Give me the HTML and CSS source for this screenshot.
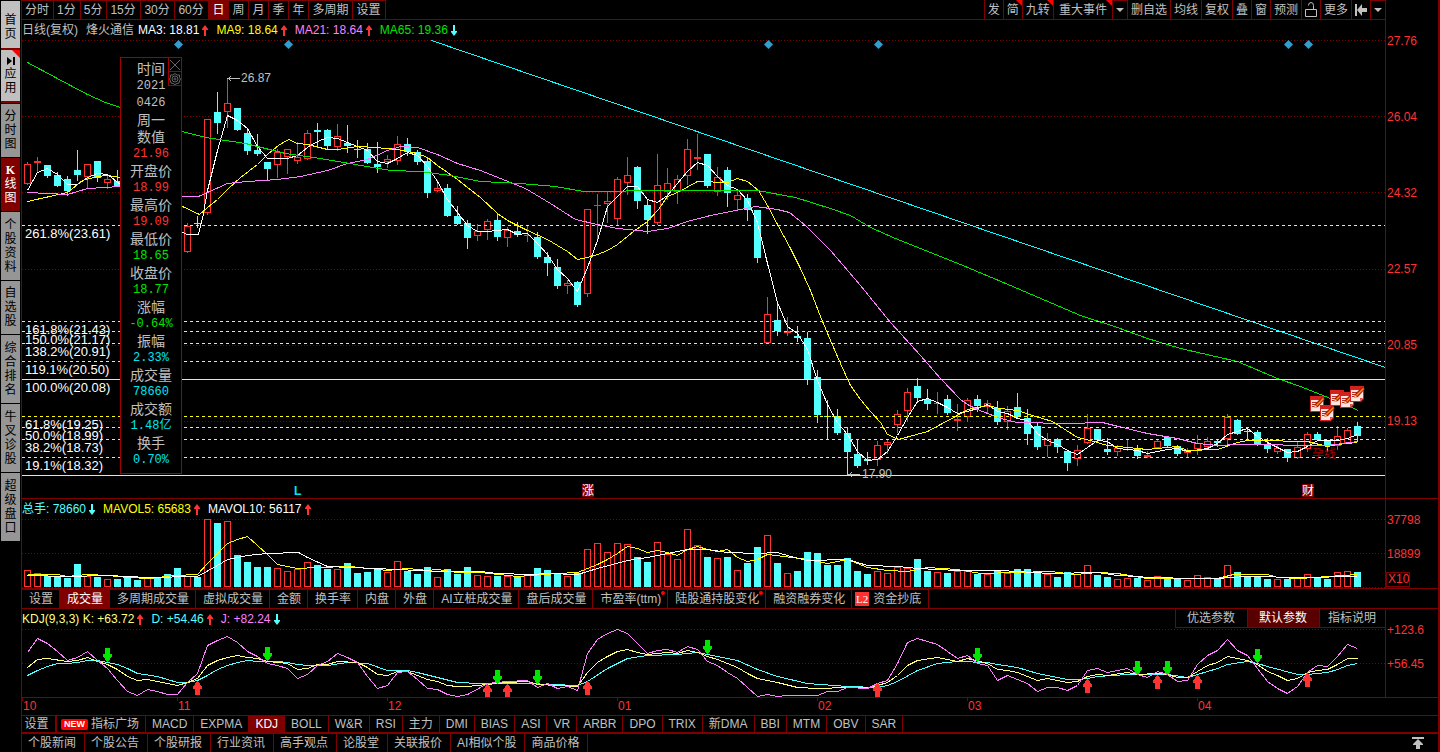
FILE: index.html
```html
<!DOCTYPE html>
<html lang="zh-CN">
<head>
<meta charset="utf-8">
<title>烽火通信 日线</title>
<link rel="stylesheet" href="styles.css">
</head>
<body>
<svg class="defs" width="0" height="0" aria-hidden="true">
  <symbol id="up" viewBox="0 0 6 11"><path d="M3 0 L6 4 V5 H4 V11 H2 V5 H0 V4 Z"/></symbol>
  <symbol id="down" viewBox="0 0 6 11"><path d="M3 11 L6 7 V6 H4 V0 H2 V6 H0 V7 Z"/></symbol>
</svg>
<div class="app">
  <nav class="side">
    <button class="side-tab light home"><span>首页</span></button>
    <button class="side-tab light apps"><svg width="8" height="8" viewBox="0 0 8 8"><path d="M0 0 L5 4 L0 8 Z M6 0 H8 V8 H6 Z"/></svg><span>应用</span></button>
    <button class="side-tab"><span>分时图</span></button>
    <button class="side-tab active"><b>K</b><span>线图</span></button>
    <button class="side-tab long"><span>个股资料</span></button>
    <button class="side-tab"><span>自选股</span></button>
    <button class="side-tab long"><span>综合排名</span></button>
    <button class="side-tab long"><span>牛叉诊股</span></button>
    <button class="side-tab long"><span>超级盘口</span></button>
  </nav>
  <main class="main">
    <section class="row price-row">
      <div class="left">
        <div class="topbar">
          <div class="group">
            <button>分时</button><button>1分</button><button>5分</button><button class="mins">15分</button><button class="mins">30分</button><button class="mins">60分</button><button class="on">日</button><button>周</button><button>月</button><button>季</button><button>年</button><button>多周期</button><button>设置</button>
          </div>
          <div class="group tools">
            <button>发</button><button class="flag">简</button><button class="flag">九转</button><button class="flag event">重大事件</button><button class="drop" aria-label="事件菜单"><svg width="8" height="4" viewBox="0 0 8 4"><path d="M0 0 H8 L4 4 Z"/></svg></button><button>删自选</button><button>均线</button><button>复权</button><button>叠</button><button>窗</button><button>预测</button><button aria-label="锁定"><svg class="line" width="12" height="15" viewBox="0 0 12 15"><path d="M.5 7.5 H11.5 V14.5 H.5 Z M3.5 3.5 Q3.5 .5 6 .5 Q8.500 .5 8.5 3.5 V7"/></svg></button><button>更多</button><button aria-label="收起"><svg width="12" height="12" viewBox="0 0 12 12"><path d="M0 0 H2 V12 H0 Z M2 6 L7 0 V4 H12 V8 H7 V12 Z"/></svg></button><button class="drop" aria-label="更多菜单"><svg width="8" height="4" viewBox="0 0 8 4"><path d="M0 0 H8 L4 4 Z"/></svg></button>
          </div>
        </div>
        <div class="panel">
          <svg class="chart price" id="price"></svg>
          <div class="info">
            <span class="gray wide">日线(复权)</span><span class="gray stock">烽火通信</span>
            <span class="white">MA3: 18.81<svg class="r"><use href="#up"/></svg></span>
            <span class="yellow">MA9: 18.64<svg class="r"><use href="#up"/></svg></span>
            <span class="pink">MA21: 18.64<svg class="r"><use href="#up"/></svg></span>
            <span class="green">MA65: 19.36<svg class="c"><use href="#down"/></svg></span>
          </div>
        </div>
        <aside class="tip">
          <div class="tip-tools">
            <button aria-label="关闭"><svg width="12" height="12" viewBox="0 0 12 12"><path d="M1 1 L11 11 M11 1 L1 11"/></svg></button>
            <button aria-label="设置"><svg width="12" height="12" viewBox="0 0 12 12"><path d="M6 .5 L8 2 L10.5 2 L10.5 4.5 L11.5 6 L10.5 8 L10 10 L8 10.5 L6 11.5 L4 10.5 L2 10 L1.5 8 L.5 6 L1.5 4.5 L1.5 2 L4 2 Z"/><circle cx="6" cy="6" r="3"/><circle cx="6" cy="6" r="1"/></svg></button>
          </div>
          <dl>
            <dt>时间</dt><dd class="gray">2021</dd><dd class="gray">0426</dd><dt>周一</dt>
            <dt>数值</dt><dd class="red">21.96</dd>
            <dt>开盘价</dt><dd class="red">18.99</dd>
            <dt>最高价</dt><dd class="red">19.09</dd>
            <dt>最低价</dt><dd class="green">18.65</dd>
            <dt>收盘价</dt><dd class="green">18.77</dd>
            <dt>涨幅</dt><dd class="green">-0.64%</dd>
            <dt>振幅</dt><dd class="cyan">2.33%</dd>
            <dt>成交量</dt><dd class="cyan">78660</dd>
            <dt>成交额</dt><dd class="cyan">1.48亿</dd>
            <dt>换手</dt><dd class="cyan">0.70%</dd>
          </dl>
        </aside>
      </div>
      <ul class="axis axis-price"><li>27.76</li><li>26.04</li><li>24.32</li><li>22.57</li><li>20.85</li><li>19.13</li></ul>
    </section>

    <section class="row">
      <div class="left panel">
        <svg class="chart volume" id="volume"></svg>
        <div class="info">
          <span class="aqua">总手: 78660<svg class="c"><use href="#down"/></svg></span>
          <span class="yellow">MAVOL5: 65683<svg class="r"><use href="#up"/></svg></span>
          <span class="white">MAVOL10: 56117<svg class="r"><use href="#up"/></svg></span>
        </div>
      </div>
      <ul class="axis axis-small"><li>37798</li><li>18899</li><li class="unit">X10</li></ul>
    </section>

    <div class="tabs">
      <button>设置</button><button class="on">成交量</button><button>多周期成交量</button><button>虚拟成交量</button><button>金额</button><button>换手率</button><button>内盘</button><button>外盘</button><button>AI立桩成交量</button><button>盘后成交量</button><button class="dot">市盈率(ttm)</button><button class="dot">陆股通持股变化</button><button>融资融券变化</button><button class="l2"><i>L2</i>资金抄底</button>
    </div>

    <section class="row">
      <div class="left panel kdj-panel">
        <svg class="chart kdj" id="kdj"></svg>
        <div class="kdj-head">
          <div class="info">
            <span class="pale">KDJ(9,3,3) K: +63.72<svg class="r"><use href="#up"/></svg></span>
            <span class="aqua">D: +54.46<svg class="r"><use href="#up"/></svg></span>
            <span class="pink">J: +82.24<svg class="c"><use href="#down"/></svg></span>
          </div>
          <div class="params"><button>优选参数</button><button class="on">默认参数</button><button>指标说明</button></div>
        </div>
      </div>
      <ul class="axis axis-small"><li>+123.6</li><li>+56.45</li></ul>
    </section>
    <svg class="chart months" id="months"></svg>

    <div class="indicators">
      <button class="set">设置</button><button class="market"><i>NEW</i>指标广场</button><button>MACD</button><button>EXPMA</button><button class="on">KDJ</button><button>BOLL</button><button>W&amp;R</button><button>RSI</button><button>主力</button><button>DMI</button><button>BIAS</button><button>ASI</button><button>VR</button><button>ARBR</button><button>DPO</button><button>TRIX</button><button>新DMA</button><button>BBI</button><button>MTM</button><button>OBV</button><button>SAR</button>
    </div>
    <footer class="bottom">
      <button>个股新闻</button><button>个股公告</button><button>个股研报</button><button>行业资讯</button><button>高手观点</button><button>论股堂</button><button>关联报价</button><button>AI相似个股</button><button>商品价格</button>
      <button class="to-top" aria-label="展开"><svg width="12" height="12" viewBox="0 0 12 12"><path d="M0 0 H12 V2 H0 Z M6 2 L11 7 V8 H8 V12 H4 V8 H1 V7 Z"/></svg></button>
    </footer>
  </main>
</div>
<script src="chart.js"></script>
</body>
</html>
```
FILE: styles.css
```css
* { box-sizing: border-box; }
body {
  margin: 0;
  background: #000;
  color: #c0c0c0;
  font: 12px/14px "Liberation Sans", "Noto Sans CJK SC", sans-serif;
}
button {
  margin: 0;
  padding: 0;
  border: 0;
  background: none;
  color: inherit;
  font: inherit;
  white-space: nowrap;
}
ul, dl, dd { margin: 0; padding: 0; list-style: none; }
svg { display: block; }
.defs { position: absolute; }

.app { display: flex; min-height: 100vh; overflow: hidden; }

.side { display: flex; flex-direction: column; width: 21px; padding: 1px 1px 0; flex: none; }
.side-tab {
  display: flex;
  flex-direction: column;
  align-items: center;
  justify-content: center;
  padding: 5px 0 6px;
  border-bottom: 1px solid #000;
  background: #969696;
  color: #000;
  line-height: 14px;
}
.side-tab span { width: 12px; white-space: normal; word-break: break-all; }
.side-tab.long { padding: 6px 0; }
.side-tab.light { background: #c0c0c0; border-bottom: 2px solid #800000; }
.side-tab.home { padding: 12px 0 7px; }
.side-tab.apps { position: relative; gap: 2px; padding: 7px 0 6px; margin-bottom: 1px; }
.side-tab.apps::after {
  content: "";
  position: absolute;
  top: 0;
  right: 0;
  border: 4px solid #f00;
  border-left-color: transparent;
  border-bottom-color: transparent;
}
.side-tab.active { background: #800000; color: #fff; }
.side-tab b { font-family: "Liberation Serif", serif; }

.main { flex: 1; min-width: 0; border-left: 1px solid #800000; border-right: 2px solid #800000; }
.row { display: grid; grid-template-columns: minmax(0, 1fr) 52px; border-bottom: 1px solid #800000; }
.left { position: relative; border-right: 1px solid #800000; }

.topbar { display: flex; justify-content: space-between; height: 20px; border-bottom: 1px solid #800000; }
.group { display: flex; }
.group button {
  display: flex;
  align-items: center;
  padding: 0 4px 0 3px;
  border-right: 1px solid #800000;
  border-top: 1px solid #800000;
}
.group .mins { min-width: 34px; }
.group .on { background: #800000; color: #fff; }
.tools { border-left: 1px solid #800000; }
.tools button { position: relative; padding: 0 3px; border-top: 0; }
.tools .event { padding: 0 5px; }
.tools .drop { border-top: 1px solid #800000; }
.tools button:last-child { border-right: 0; }
.tools svg { fill: #c0c0c0; }
.tools svg.line { fill: none; stroke: #c0c0c0; }
.flag::after {
  content: "";
  position: absolute;
  top: 0;
  right: 0;
  border: 3px solid #f00;
  border-left-color: transparent;
  border-bottom-color: transparent;
}

.panel { display: grid; }
.panel > * { grid-area: 1 / 1; min-width: 0; }
.chart { width: 100%; overflow: hidden; }
.price { height: 478px; }
.volume { height: 89px; }
.kdj { height: 88px; }
.months { height: 17px; }
.chart text { font: 12px "Liberation Sans", "Noto Sans CJK SC", sans-serif; }
.chart .fib { font-size: 13px; fill: #fff; }
.chart .strong { font-weight: bold; }

.info { display: flex; align-self: start; gap: 8px; padding-top: 3px; white-space: nowrap; }
.info span { display: flex; align-items: center; gap: 3px; }
.info svg { width: 6px; height: 11px; }
.info .stock { margin-right: -4px; }
.r { fill: #ff3232; }
.c { fill: #54ffff; }
.gray { color: #c0c0c0; }
.white { color: #fff; }
.yellow { color: #ff0; }
.pink { color: #ff80ff; }
.green { color: #00e600; }
.red { color: #ff3232; }
.cyan { color: #00e6f0; }
.aqua { color: #54ffff; }
.pale { color: #ffff80; }

.axis { padding: 34px 0 0; color: #ff3232; line-height: 14px; }
.axis li { padding-left: 1px; height: 76px; }
.axis-small li { height: 34px; }
.axis-small { padding-top: 14px; }
.axis .unit {
  width: 24px;
  height: 15px;
  margin-top: -9px;
  border: 1px solid #800000;
  line-height: 13px;
}

.tip {
  position: absolute;
  top: 57px;
  left: 98px;
  width: 62px;
  padding: 3px 0 4px;
  border: 1px solid #a00000;
  background: #000;
  text-align: center;
}
.tip-tools { position: absolute; top: -1px; right: -1px; width: 14px; border: 1px solid #a00000; }
.tip-tools button { display: block; height: 13px; }
.tip-tools button + button { height: 14px; border-top: 1px solid #a00000; }
.tip-tools svg { fill: none; stroke: #666; }
.tip dt, .tip dd { line-height: 17px; height: 17px; }
.tip dt { font-size: 14px; }
.tip dd { font-family: "Liberation Mono", "Noto Sans CJK SC", monospace; }

.tabs, .indicators, .bottom { display: flex; }
.tabs { height: 20px; border-bottom: 1px solid #800000; }
.tabs button { position: relative; padding: 0 6px 0 7px; border-right: 1px solid #800000; border-top: 1px solid #800000; }
.tabs .on, .indicators .on { background: #800000; color: #fff; }
.tabs .dot::after {
  content: "";
  position: absolute;
  top: 1px;
  right: 2px;
  width: 4px;
  height: 4px;
  border-radius: 2px;
  background: #f00;
}
.tabs .l2 { display: flex; align-items: center; gap: 4px; padding: 0 7px 0 3px; }
.l2 i { width: 14px; background: #ff3232; color: #fff; font: 11px/14px "Liberation Serif", serif; }

.kdj-head { display: flex; justify-content: space-between; align-items: flex-start; }
.params { display: flex; border-left: 1px solid #800000; border-bottom: 1px solid #800000; background: #000; }
.params button { height: 18px; padding: 0 12px 0 11px; border-right: 1px solid #800000; }
.params button:last-child { padding: 0 9px 0 8px; border-right: 0; }
.params .on { background: #580000; color: #fff; }

.indicators { height: 17px; border-top: 1px solid #800000; }
.indicators button { padding: 0 6px; border-right: 1px solid #800000; }
.indicators .set { width: 34px; padding: 0 6px 0 2px; }
.indicators .market { display: flex; align-items: center; gap: 3px; padding: 0 6px 0 4px; border-left: 1px solid #800000; }
.market i {
  width: 27px;
  border-radius: 2px;
  background: #f00;
  color: #fff;
  font: bold 9px/11px "Liberation Sans", sans-serif;
}
.bottom { height: 20px; border-top: 2px solid #800000; }
.bottom button { padding: 0 8px 0 6px; border-right: 1px solid #800000; }
.bottom .to-top { margin-left: auto; padding: 0 14px 0 0; border: 0; }
.to-top svg { fill: #c0c0c0; }
```
FILE: chart.js
```js
const RED = '#ff3232', CYAN = '#54ffff', DARK = '#800000';
const LEFT = 22, SPAN = 1363;

// One candle per trading day: direction, high, body top, body bottom, low.
const candles = `
R162,164,184,184 R157,161,163,171 C165,165,176,177 C172,175,186,186 C176,179,191,195 C150,170,175,180 R164,164,177,187 C161,161,178,181 R175,179,183,188 C170,181,186,186
C0,0,0,0 C0,0,0,0 R0,0,0,0 C0,0,0,0 C0,0,0,0 C0,0,0,0 R223,226,252,252 C216,223,224,227 R119,119,213,214 C92,112,123,133
R78,103,112,127 C108,108,130,130 C128,133,151,154 C134,150,154,155 C162,162,169,179 R149,152,165,177 R149,149,157,173 R142,157,161,163 R130,133,159,159 C123,130,132,146
C129,130,146,149 R124,136,147,150 C125,143,146,152 C140,149,150,157 C143,149,163,163 C142,164,167,172 R155,159,162,167 R136,144,161,164 C138,144,152,155 C150,152,162,164
C158,161,193,197 R180,188,191,191 C184,188,216,216 C206,216,224,224 C220,223,238,248 R224,231,236,240 R219,221,230,239 C214,220,237,240 R227,230,238,246 C222,231,235,236
R225,235,236,241 C232,237,257,258 C252,257,263,275 C259,267,286,288 R280,283,286,293 C281,282,305,306 R209,209,294,296 R194,205,206,240 R191,201,204,222 R177,179,219,225
R157,175,183,194 C166,167,201,208 C199,205,220,233 R154,185,223,224 R168,183,192,199 R175,179,192,203 R139,149,176,184 R134,157,159,169 C154,154,186,187 R167,177,192,195
C167,170,193,206 R191,195,200,209 C194,198,210,220 C210,210,258,262 R297,314,343,343 C304,320,331,335 R317,331,333,335 C326,336,338,341 C332,338,379,384 C370,377,415,422
C400,416,417,438 C409,416,433,434 C427,433,452,475 C440,454,466,467 C452,459,461,464 R441,445,460,465 R440,442,445,453 R410,414,425,432 R388,392,411,421 C378,386,398,402
C389,399,404,409 R392,403,404,413 C395,399,413,414 R404,419,421,430 R398,400,417,421 C395,399,406,411 R400,403,407,413 C401,408,422,424 R406,411,422,429 C393,407,417,417
C409,418,434,444 C422,426,447,449 R433,439,446,456 C438,439,447,452 C451,451,463,470 R445,450,459,465 R414,428,443,443 C429,429,440,442 C438,449,452,454 R445,448,452,455
R439,447,448,450 C445,449,456,458 R451,455,457,457 R439,441,448,448 C437,437,446,447 C445,446,454,455 R448,451,453,457 R435,443,449,454 R437,441,447,448 C439,441,443,446
R414,417,439,443 C419,420,434,434 C428,431,432,440 C430,432,444,445 C438,444,449,452 R444,448,452,453 C449,449,458,461 R442,447,458,458 R432,434,449,451 C432,434,440,440
C440,440,446,451 R426,436,446,449 R428,430,443,443 C422,426,436,441`.trim().split(/\s+/).map(s => [s[0], ...s.slice(1).split(',').map(Number)]);

const volumes = [570,573,576,577,578,564,576,577,579,579,578,580,577,578,574,568,576,577,519,523,521,555,562,567,567,568,571,569,562,565,569,569,563,573,572,569,572,561,571,574,567,577,569,574,567,575,576,576,576,577,575,568,570,573,576,573,549,543,552,543,544,557,562,542,554,559,529,545,557,558,557,570,563,547,535,563,573,571,552,553,565,565,558,571,574,571,573,567,568,559,571,572,573,571,571,574,574,570,573,569,569,572,574,577,572,574,565,575,577,579,578,578,580,576,579,579,580,575,577,579,565,572,577,577,579,579,579,578,574,577,579,572,571,572];

const ma3 = '27,190 37,172 47,168 57,174 67,184 77,184 87,177 97,173 107,174 120,184 182,232 187,234 198,234 202,218 207,190 217,150 227,115 237,120 247,128 257,146 267,158 277,158 287,158 297,155 307,147 317,141 327,137 337,138 347,142 357,146 367,150 377,161 387,163 397,158 407,152 417,155 427,166 437,181 447,199 457,212 467,225 477,231 487,231 507,229 517,234 527,233 537,243 547,254 557,269 567,278 577,291 587,267 597,240 607,206 617,196 627,186 637,186 647,199 657,202 667,195 677,183 687,171 697,162 707,165 717,176 727,185 737,189 747,200 757,222 767,263 777,302 787,326 797,333 807,349 817,380 827,404 837,422 847,434 857,451 867,460 877,459 887,451 897,435 907,417 917,401 927,398 937,402 947,407 957,413 967,411 977,408 987,404 997,411 1007,413 1017,418 1027,420 1037,433 1047,440 1057,444 1067,450 1077,454 1087,447 1097,440 1107,441 1117,448 1127,449 1137,450 1147,453 1167,449 1177,448 1187,451 1207,448 1217,443 1227,434 1237,431 1247,428 1257,436 1267,442 1277,447 1287,452 1297,451 1307,446 1317,440 1337,440 1347,438 1357,434';
const ma9 = '27,201 67,192 82,180 97,176 107,175 120,177 182,206 199,214 207,207 217,199 227,189 240,177 257,164 268,153 278,145 288,139 297,143 307,144 327,149 337,149 357,146 375,147 397,149 417,153 427,157 437,165 447,172 457,179 467,187 480,197 497,213 507,220 527,230 547,239 567,251 577,259 587,257 597,254 607,250 617,244 633,231 647,221 658,209 667,196 677,192 697,181 727,182 737,178 747,181 758,190 767,205 777,224 790,248 800,268 810,290 820,316 830,340 840,363 850,385 860,399 870,411 880,422 887,434 898,439 927,431 940,424 957,415 967,409 977,407 987,405 1000,408 1017,410 1032,415 1052,421 1077,437 1090,440 1107,445 1147,449 1177,446 1187,450 1217,449 1237,442 1247,440 1277,440 1287,441 1307,441 1327,446 1337,444 1357,442';
const ma21 = '27,192 67,194 87,188 120,186 182,196 198,196 227,183 247,181 277,179 300,176 327,170 347,163 367,159 387,150 400,146 417,147 437,154 457,163 480,170 500,178 525,188 550,203 575,219 597,224 617,228 647,231 667,228 687,221 710,215 745,208 755,206 777,209 789,212 805,225 830,250 860,285 890,322 920,355 940,378 960,399 967,404 977,409 1000,418 1017,422 1067,423 1102,422 1122,427 1147,433 1177,438 1197,443 1217,445 1237,444 1327,445 1357,441';
const ma65 = '27,62 55,77 70,85 87,94 105,102 120,107 182,131 205,137 245,143 285,153 320,158 355,164 390,170 420,171 450,175 480,181 520,183 555,186 583,191 615,191 637,190 757,190 795,197 830,208 850,215 870,227 895,238 925,250 960,264 1010,285 1080,315 1117,327 1147,338 1180,348 1237,361 1277,378 1300,386 1325,396 1358,410';
const vol5 = '27,574 57,574 67,576 87,574 107,575 127,577 150,578 165,576 175,575 197,574 207,563 227,543 237,539 247,536 267,554 277,564 297,568 317,567 350,566 387,570 407,568 427,570 437,569 457,572 480,572 517,576 557,573 577,572 597,564 607,559 617,553 627,546 637,548 647,552 657,550 667,552 677,555 687,549 697,546 707,549 717,551 727,549 737,557 747,561 757,559 767,554 807,559 827,563 847,559 867,567 887,570 907,571 927,567 957,569 980,573 1050,571 1075,574 1097,572 1117,573 1147,578 1217,578 1233,574 1267,574 1277,577 1300,578 1327,576 1357,574';
const vol10 = '27,575 67,576 107,575 147,577 197,576 217,565 227,559 247,555 267,553 298,552 307,557 327,566 397,569 440,571 480,571 497,573 530,574 547,573 577,574 597,568 627,560 647,557 667,553 687,549 707,549 727,552 757,553 777,552 790,556 807,560 847,559 867,565 897,566 917,568 957,570 1000,570 1050,573 1097,572 1117,575 1137,576 1147,577 1197,578 1220,578 1227,577 1250,576 1300,577 1357,576';
const lineJ = '27,652 37,638 47,643 57,651 67,660 77,657 87,651 97,660 107,668 117,680 127,691 137,695 147,689 157,691 167,694 177,694 187,682 197,673 207,645 217,640 227,636 237,642 247,651 257,656 267,663 277,665 287,668 297,678 307,674 317,665 327,661 337,653 347,657 357,662 367,676 377,688 387,685 397,672 407,671 417,679 427,688 437,689 447,694 457,696 467,694 480,687 487,683 507,681 527,680 537,687 547,683 557,688 567,686 577,690 587,653 597,639 607,633 617,629 627,633 637,643 647,653 657,650 667,649 677,652 687,646 697,649 707,661 717,665 727,672 737,678 747,687 757,696 767,694 777,696 787,695 817,695 827,691 837,691 847,687 867,688 877,683 887,680 897,663 907,642 917,638 937,644 947,651 957,658 967,655 977,663 987,665 997,680 1007,675 1017,679 1027,683 1037,691 1047,687 1057,687 1067,690 1077,685 1087,670 1097,668 1107,672 1127,668 1137,674 1147,677 1157,671 1167,674 1177,681 1187,680 1197,664 1207,655 1217,650 1227,639 1237,650 1247,655 1257,668 1267,681 1277,688 1287,693 1297,686 1307,672 1317,665 1327,666 1337,656 1347,644 1357,648';
const lineK = '27,667 37,659 47,658 67,661 77,660 87,657 97,661 107,664 117,669 127,676 137,680 147,679 157,681 177,685 187,682 197,678 207,665 217,660 227,657 237,655 247,657 257,658 267,661 277,662 287,663 297,669 307,668 317,664 327,664 337,661 357,662 367,667 377,674 387,675 397,671 407,671 417,675 427,679 437,681 447,685 457,686 467,686 487,684 507,682 527,681 537,684 577,686 587,672 597,662 607,656 617,651 627,649 637,652 647,654 667,652 677,653 687,650 697,652 707,656 717,659 727,663 737,667 747,673 757,678 777,682 797,687 817,688 847,687 867,687 877,685 887,682 897,675 907,665 917,660 937,657 957,661 967,658 987,663 997,669 1007,670 1017,672 1037,680 1047,678 1067,682 1077,681 1087,676 1097,674 1107,675 1127,672 1137,674 1157,673 1167,674 1177,677 1187,677 1197,671 1207,665 1217,662 1227,656 1237,658 1247,660 1257,664 1267,671 1277,675 1287,680 1297,678 1307,672 1317,670 1327,669 1337,664 1347,658 1357,658';
const lineD = '27,675 37,670 47,666 57,663 67,663 77,662 87,660 97,660 107,662 117,664 127,668 137,673 157,676 177,682 187,682 197,680 207,675 217,669 227,665 237,662 247,660 257,661 277,661 287,662 297,664 307,665 327,665 347,662 367,663 387,670 407,670 417,672 437,677 457,682 480,683 527,683 577,685 587,681 607,668 627,658 647,655 677,654 697,652 717,656 737,660 757,669 777,676 807,683 847,686 877,687 887,685 897,681 917,670 937,663 957,661 987,662 997,664 1017,667 1037,673 1067,679 1077,679 1087,678 1097,676 1127,674 1167,674 1187,677 1197,674 1207,671 1217,668 1227,664 1247,661 1257,663 1267,666 1297,674 1307,674 1327,672 1337,669 1347,665 1357,663';

const fibs = [[225, '261.8%(23.61)'], [321, '161.8%(21.43)'], [331, '150.0%(21.17)'], [343, '138.2%(20.91)'], [361, '119.1%(20.50)'], [379, '100.0%(20.08)', 1], [416, '61.8%(19.25)'], [427, '50.0%(18.99)'], [439, '38.2%(18.73)'], [457, '19.1%(18.32)'], [475, '', 1]];

function draw() {
  const width = document.getElementById('price').clientWidth;
  const X = x => Math.round((x - LEFT) * width / SPAN);
  const grid = ys => ys.map(y => `<path d="M0 ${y}.5 H${width}" stroke="${DARK}" stroke-dasharray="1 2"/>`).join('');
  const line = (pts, color) => {
    const mapped = pts.split(' ').map(p => { const [x, y] = p.split(','); return `${X(+x) + .5},${+y + .5}`; });
    return `<polyline points="${mapped.join(' ')}" fill="none" stroke="${color}"/>`;
  };
  const label = (x, y, text, color, extra = '') => `<text x="${X(x)}" y="${y}" fill="${color}" ${extra}>${text}</text>`;
  const put = (id, top, body) => { document.getElementById(id).innerHTML = `<g transform="translate(0 ${-top})">${body}</g>`; };

  let s = '<g shape-rendering="crispEdges">' + grid([40, 116, 192, 269, 345, 421]);
  candles.forEach(([dir, high, top, bottom, low], i) => {
    if (!high) return;
    const x = X(27 + i * 10), h = bottom - top;
    if (dir === 'C') {
      s += `<path d="M${x} ${high} h1 V${low + 1} h-1 Z M${x - 3} ${top} h7 V${bottom} h-7 Z" fill="${CYAN}" fill-rule="nonzero"/>`;
    } else {
      s += `<path d="M${x} ${high} h1 V${top} h-1 Z M${x} ${bottom} h1 V${low + 1} h-1 Z" fill="${RED}"/>`;
      s += h < 3 ? `<rect x="${x - 3}" y="${top}" width="7" height="${h}" fill="${RED}"/>`
                 : `<rect x="${x - 2.5}" y="${top + .5}" width="6" height="${h - 1}" fill="none" stroke="${RED}"/>`;
    }
  });
  s += line(ma3, '#fff') + line(ma9, '#ff0') + line(ma21, '#ff80ff') + line(ma65, '#00e600') + line('431,40 1385,367', '#0ff');
  fibs.forEach(([y, , solid]) => { s += `<path d="M0 ${y}.5 H${width}" stroke="#ff0" ${solid ? '' : 'stroke-dasharray="3 3"'}/>`; });
  s += `<path d="M${X(228)} 78.5 h12 m-9 -2 l-3 2 l3 2 M${X(849)} 474.5 h11 m-8 -2 l-3 2 l3 2" fill="none" stroke="#c0c0c0"/></g>`;
  fibs.forEach(([y, text]) => { s += label(25, y + 13, text, '#fff', 'class="fib"'); });
  [178, 288, 768, 878, 1288, 1308].forEach(x => { s += `<path d="M${X(x)}.5 40 l4.5 4.5 l-4.5 4.5 l-4.5 -4.5 Z" fill="#329fcb"/>`; });
  s += label(241, 82, '26.87', '#c0c0c0') + label(862, 478, '17.90', '#c0c0c0') + label(294, 495, 'L', '#00e6f0', 'class="strong"');
  s += label(1312, 458, '孕线', '#a00000');
  [[582, '涨'], [1302, '财']].forEach(([x, t]) => { s += `<rect x="${X(x)}" y="484" width="12" height="13" fill="${DARK}"/>` + label(x, 495, t, '#fff'); });
  [[1310, 396], [1330, 390], [1320, 405], [1340, 392], [1350, 386]].forEach(([x, y]) => {
    s += `<g transform="translate(${X(x)} ${y})"><path d="M0 0 H14 V13 L11 16 H0 Z" fill="#d62020"/><path d="M1 4 H13 V12 L10 15 H1 Z" fill="#ffe4e0"/><path d="M10 12 h3 l-3 3 Z" fill="#e05048"/><path d="M2 6.5 H8 M2 8.5 H6 M2 10.5 H5" stroke="#b03028"/><path d="M4 12 L5 8 L12 1 L15 3 L8 11 Z" fill="#a82000"/><path d="M6 9 L13 2 L14 3 L7 10 Z" fill="#ff8c20"/><path d="M4 12 L5 9 L7 11 Z" fill="#ffd8a0"/></g>`;
  });
  put('price', 20, s);

  s = '<g shape-rendering="crispEdges">' + grid([519, 553, 587]);
  volumes.forEach((top, i) => {
    const x = X(27 + i * 10);
    s += candles[i][0] === 'C' ? `<rect x="${x - 3}" y="${top}" width="7" height="${587 - top}" fill="${CYAN}"/>`
                               : `<rect x="${x - 2.5}" y="${top}.5" width="6" height="${586 - top}" fill="none" stroke="${RED}"/>`;
  });
  put('volume', 499, s + line(vol5, '#ff0') + line(vol10, '#fff') + '</g>');

  s = '<g shape-rendering="crispEdges">' + grid([629, 663]) + line(lineD, CYAN) + line(lineK, '#ffff80') + line(lineJ, '#ff80ff');
  [[107, 648], [267, 647], [497, 670], [537, 670], [707, 640], [977, 648], [1137, 661], [1167, 661], [1257, 649]].forEach(([x, y]) => {
    s += `<path d="M${X(x) - 2} ${y} h5 v6 h2 v2 l-4 6 h-1 l-4 -6 v-2 h2 Z" fill="#00e600"/>`;
  });
  [[197, 681], [487, 684], [507, 684], [587, 681], [877, 683], [1087, 679], [1157, 675], [1197, 675], [1307, 673]].forEach(([x, y]) => {
    s += `<path d="M${X(x)} ${y} h1 l4 6 v2 h-2 v6 h-5 v-6 h-2 v-2 Z" fill="${RED}"/>`;
  });
  put('kdj', 609, s + '</g>');

  put('months', 698, [[22, '10'], [177, '11'], [387, '12'], [617, '01'], [817, '02'], [967, '03'], [1197, '04']].map(([x, t]) =>
    `<path d="M${X(x)}.5 698 v3" stroke="${DARK}"/>` + label(x + 1, 710, t, RED)).join(''));
}
draw();
addEventListener('resize', draw);
```
